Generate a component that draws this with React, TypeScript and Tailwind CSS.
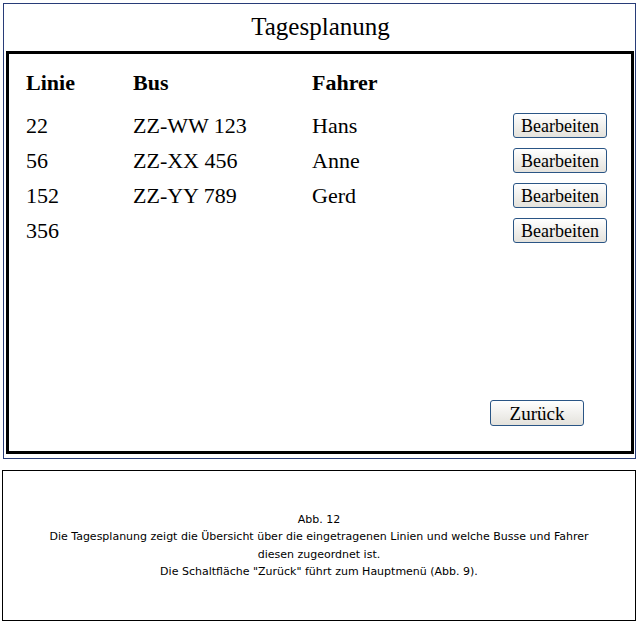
const rows = [
  { linie: "22", bus: "ZZ-WW 123", fahrer: "Hans" },
  { linie: "56", bus: "ZZ-XX 456", fahrer: "Anne" },
  { linie: "152", bus: "ZZ-YY 789", fahrer: "Gerd" },
  { linie: "356", bus: "", fahrer: "" },
];

const serif = "font-['Liberation_Serif','Times_New_Roman',serif]";

function OldButton({ label, className }: { label: string; className: string }) {
  return (
    <button
      type="button"
      className={`rounded-[3px] border border-[#2a5585] bg-gradient-to-b from-white to-[#e4e2dc] leading-none text-black ${serif} ${className}`}
    >
      {label}
    </button>
  );
}

export default function App() {
  return (
    <div className="h-[638px] w-[638px] bg-white">
      <div className="ml-[3px] mt-[3px] flex h-[456px] w-[633px] flex-col border border-[#283c78] pl-[2px]">
        <h1 className={`h-[47px] pt-[8px] text-center text-[25px] leading-[30px] text-black ${serif}`}>Tagesplanung</h1>
        <div className="flex h-[403px] w-[628px] flex-col border-[3px] border-black">
          <div className={`flex h-[54px] items-center pl-[17px] pt-[2px] text-[22px] font-bold text-black ${serif}`}>
            <span className="w-[107px]">Linie</span>
            <span className="w-[179px]">Bus</span>
            <span>Fahrer</span>
          </div>
          <div className="flex flex-col">
            {rows.map((row) => (
              <div key={row.linie} className={`flex h-[35px] items-center pl-[17px] text-[22px] text-black ${serif}`}>
                <span className="w-[107px]">{row.linie}</span>
                <span className="w-[179px]">{row.bus}</span>
                <span className="w-[201px]">{row.fahrer}</span>
                <OldButton label="Bearbeiten" className="h-[25px] w-[94px] text-[18px]" />
              </div>
            ))}
          </div>
          <div className="mt-auto flex justify-end pb-[25px] pr-[47px]">
            <OldButton label="Zurück" className="h-[26px] w-[94px] text-[19px]" />
          </div>
        </div>
      </div>
      <div className="ml-[2px] mt-[11px] flex h-[151px] w-[634px] flex-col items-center justify-center border border-black text-center font-['DejaVu_Sans',sans-serif] text-[11px] leading-[17.5px] text-black">
        <p>Abb. 12</p>
        <p>Die Tagesplanung zeigt die Übersicht über die eingetragenen Linien und welche Busse und Fahrer</p>
        <p>diesen zugeordnet ist.</p>
        <p>Die Schaltfläche "Zurück" führt zum Hauptmenü (Abb. 9).</p>
      </div>
    </div>
  );
}
